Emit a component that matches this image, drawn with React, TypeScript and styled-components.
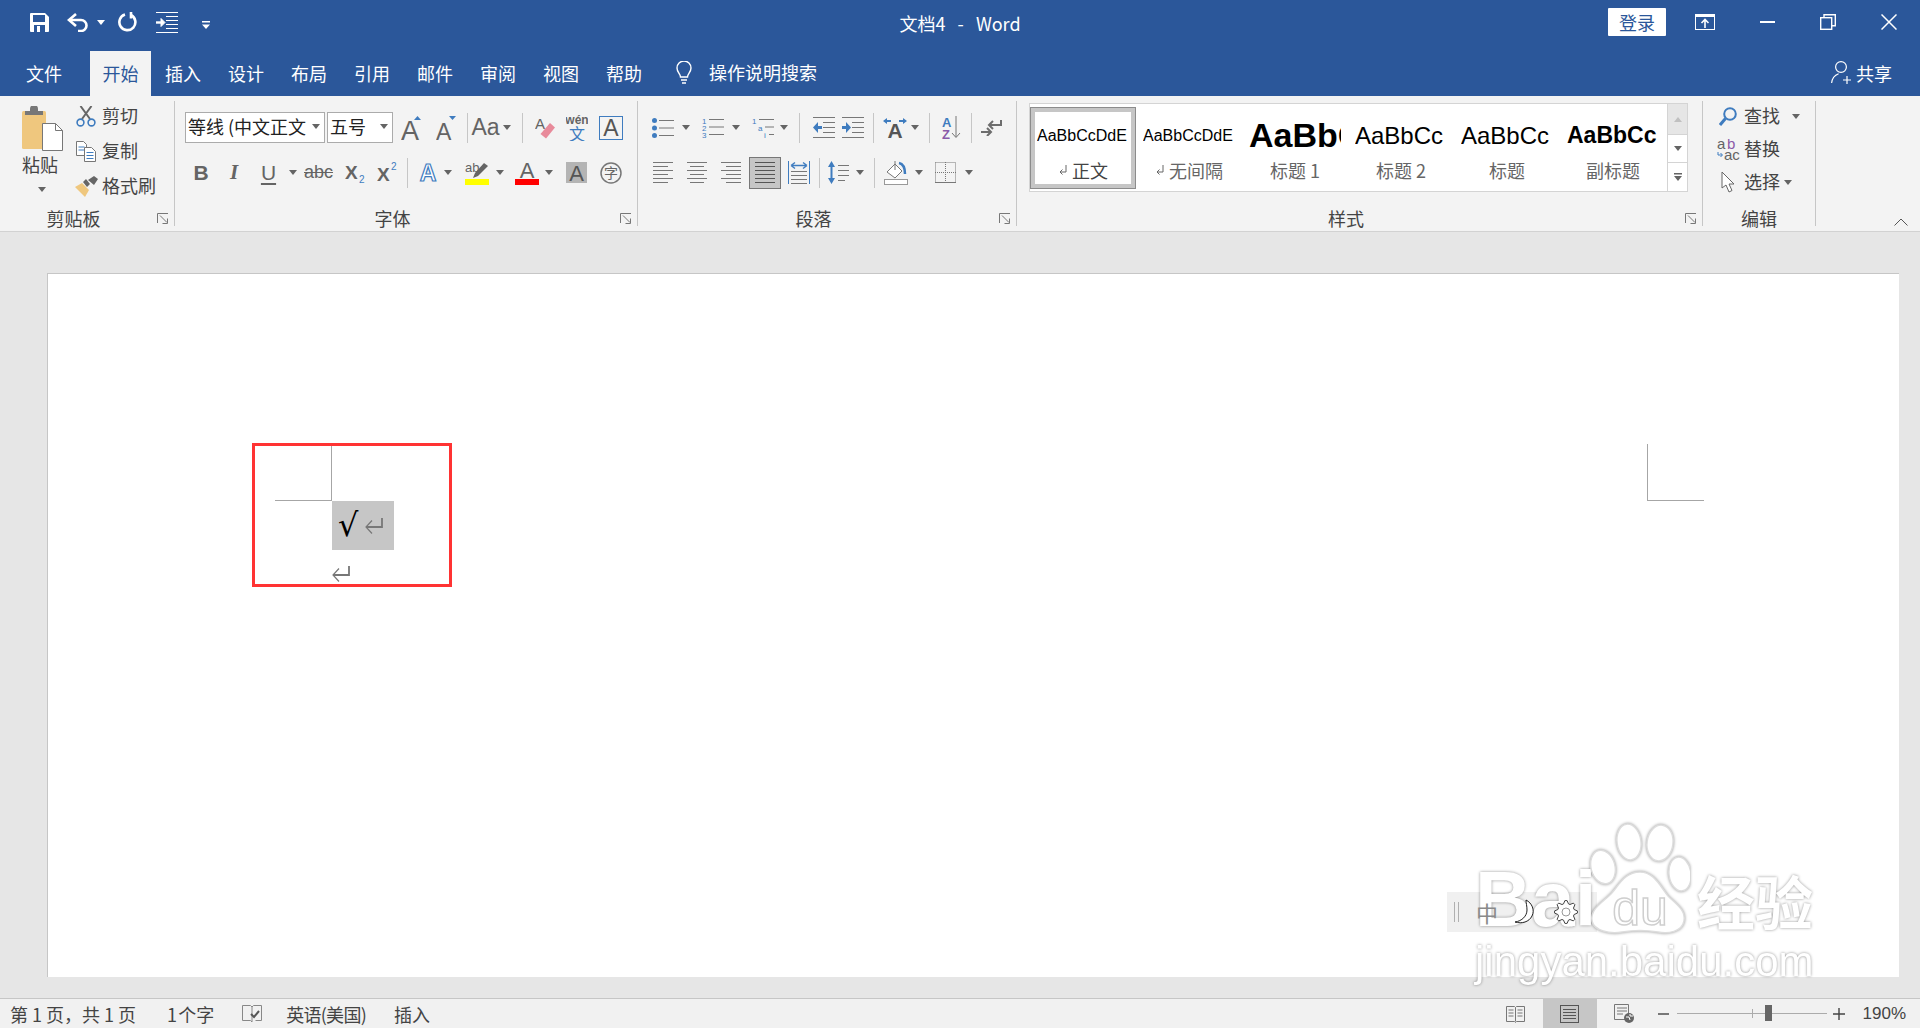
import { FC, ReactNode } from 'react'
import styled, { createGlobalStyle } from 'styled-components'

const GRAY = '#646464'
const BLUE = '#3f7cbf'
const CJK = '"Noto Sans CJK SC", "Liberation Sans", sans-serif'

const GlobalStyle = createGlobalStyle`
  html, body {
    margin: 0;
    width: 1920px;
    height: 1028px;
    overflow: hidden;
  }
  body {
    font-family: ${CJK};
    font-size: 18px;
    color: #444444;
  }
  svg {
    display: block;
    flex-shrink: 0;
  }
  svg text {
    font-family: "Liberation Sans", "Noto Sans CJK SC", sans-serif;
  }
`

const Window = styled.div`
  position: relative;
  width: 1920px;
  height: 1028px;
  display: flex;
  flex-direction: column;
  overflow: hidden;
  background: #e6e6e6;
`

/* title bar */
const TitleBar = styled.header`
  height: 51px;
  padding-bottom: 7px;
  box-sizing: border-box;
  background: #2b579a;
  color: #ffffff;
  display: grid;
  grid-template-columns: 1fr auto 1fr;
  align-items: center;
`

const QuickAccess = styled.div`
  display: flex;
  align-items: center;
  padding-left: 30px;
`

const WindowTitle = styled.div`
  white-space: pre;
  font-size: 18px;
  padding-top: 1px;
`

const WindowControls = styled.div`
  display: flex;
  align-items: center;
  justify-content: flex-end;
  padding-right: 23px;
`

const Slot = styled.div<{ $ml?: number; $mt?: number }>`
  margin-left: ${({ $ml }) => $ml ?? 0}px;
  margin-top: ${({ $mt }) => $mt ?? 0}px;
  display: flex;
`

const LoginButton = styled.button`
  width: 58px;
  height: 28px;
  border: 0;
  border-radius: 1px;
  padding: 0;
  background: #ffffff;
  color: #2b579a;
  font: inherit;
  font-size: 18px;
  line-height: 28px;
`

/* tabs */
const TabBar = styled.nav`
  height: 45px;
  background: #2b579a;
  color: #ffffff;
  display: flex;
  align-items: stretch;
  gap: 1px;
  padding-left: 13px;
`

const Tab = styled.div<{ $active?: boolean; $ml?: number }>`
  width: ${({ $active }) => ($active ? 61 : 62)}px;
  margin-left: ${({ $ml }) => $ml ?? 0}px;
  padding-bottom: 2px;
  box-sizing: border-box;
  display: flex;
  align-items: center;
  justify-content: center;
  background: ${({ $active }) => ($active ? '#f3f3f3' : 'transparent')};
  color: ${({ $active }) => ($active ? '#2b579a' : '#ffffff')};
`

const SearchHint = styled.div`
  display: flex;
  align-items: center;
  gap: 14px;
  margin-left: 17px;
  padding-bottom: 3px;
`

const ShareButton = styled.div`
  display: flex;
  align-items: center;
  gap: 4px;
  margin-left: auto;
  padding-right: 28px;
  padding-bottom: 2px;
`

/* ribbon */
const Ribbon = styled.section`
  height: 136px;
  box-sizing: border-box;
  border-bottom: 1px solid #d2d2d2;
  background: #f3f3f3;
  display: flex;
`

const Group = styled.div<{ $w: number }>`
  position: relative;
  box-sizing: border-box;
  width: ${({ $w }) => $w}px;
  height: 125px;
  margin-top: 5px;
  border-right: 1px solid #c6c6c6;
  display: flex;
  flex-direction: column;
`

const GroupBody = styled.div`
  height: 110px;
  flex-shrink: 0;
  display: flex;
`

const GroupLabel = styled.div<{ $pr?: number }>`
  height: 14px;
  line-height: 14px;
  padding-right: ${({ $pr }) => $pr ?? 0}px;
  text-align: center;
  color: #444444;
`

const Launcher = styled.div`
  position: absolute;
  right: 5px;
  bottom: 2px;
`

const Collapse = styled.div`
  flex: 1;
  display: flex;
  align-items: flex-end;
  justify-content: flex-end;
  padding: 0 12px 5px 0;
`

const PasteBlock = styled.div`
  width: 75px;
  box-sizing: border-box;
  padding: 5px 0 0 22px;
  display: flex;
  flex-direction: column;
  align-items: flex-start;
`

const PasteLabel = styled.div`
  width: 36px;
  line-height: 20px;
  margin-top: 2px;
`

const PasteCaret = styled.div`
  margin: 13px 0 0 16px;
`

const ActionStack = styled.div<{ $gap: number; $pl: number }>`
  display: flex;
  flex-direction: column;
  gap: ${({ $gap }) => $gap}px;
  padding-left: ${({ $pl }) => $pl}px;
`

const ActionRow = styled.div`
  height: 30px;
  display: flex;
  align-items: center;
`

const ActionIcon = styled.div`
  width: 22px;
  margin-right: 5px;
  display: flex;
  justify-content: center;
`

const ActionLabel = styled.span`
  margin-top: -2px;
`

const ToolStack = styled.div`
  padding-top: 4px;
  display: flex;
  flex-direction: column;
`

const ToolRow = styled.div<{ $pl?: number }>`
  height: 45px;
  padding-left: ${({ $pl }) => $pl ?? 0}px;
  display: flex;
  align-items: center;
`

const Tool = styled.div<{ $w: number; $ml?: number }>`
  width: ${({ $w }) => $w}px;
  margin-left: ${({ $ml }) => $ml ?? 0}px;
  height: 32px;
  display: flex;
  align-items: center;
  justify-content: center;
`

const PressedTool = styled(Tool)`
  box-sizing: border-box;
  background: #c6c6c6;
  border: 1px solid #777777;
`

const Sep = styled.div<{ $w: number }>`
  width: ${({ $w }) => $w}px;
  height: 30px;
  display: flex;
  justify-content: center;

  &::before {
    content: '';
    width: 1px;
    background: #c6c6c6;
  }
`

const SelectBox = styled.div<{ $w: number; $ml?: number }>`
  position: relative;
  box-sizing: border-box;
  width: ${({ $w }) => $w}px;
  margin-left: ${({ $ml }) => $ml ?? 0}px;
  height: 31px;
  padding-left: 2px;
  border: 1px solid #ababab;
  background: #ffffff;
  color: #222222;
  line-height: 26px;
  white-space: nowrap;
  overflow: hidden;
`

const SelectCaret = styled.div`
  position: absolute;
  top: 11px;
  right: 4px;
  padding-left: 2px;
  background: #ffffff;
`

const Glyph = styled.span<{ $size: number; $bold?: boolean; $italic?: boolean; $serif?: boolean; $under?: boolean; $strike?: boolean }>`
  font-family: ${({ $serif }) => ($serif ? '"Liberation Serif"' : '"Liberation Sans"')}, sans-serif;
  font-size: ${({ $size }) => $size}px;
  font-weight: ${({ $bold }) => ($bold ? 700 : 400)};
  font-style: ${({ $italic }) => ($italic ? 'italic' : 'normal')};
  text-decoration: ${({ $under, $strike }) => ($under ? 'underline' : $strike ? 'line-through' : 'none')};
  text-underline-offset: 3px;
  color: ${GRAY};
`

/* style gallery */
const Gallery = styled.div`
  box-sizing: border-box;
  width: 659px;
  height: 89px;
  margin: 2px 0 0 12px;
  border: 1px solid #d4d4d4;
  background: #ffffff;
  display: flex;
`

const StyleItem = styled.div<{ $selected?: boolean }>`
  box-sizing: border-box;
  width: 106px;
  height: 82px;
  margin-top: 3px;
  border: 1px solid ${({ $selected }) => ($selected ? '#8c8c8c' : 'transparent')};
  box-shadow: ${({ $selected }) => ($selected ? 'inset 0 0 0 4px #c6c6c6' : 'none')};
  display: flex;
  flex-direction: column;
  align-items: center;
`

const StylePreview = styled.div<{ $size: number; $bold?: boolean }>`
  width: 92px;
  height: 55px;
  flex-shrink: 0;
  overflow: hidden;
  white-space: nowrap;
  font-family: "Liberation Sans", sans-serif;
  font-size: ${({ $size }) => $size}px;
  font-weight: ${({ $bold }) => ($bold ? 700 : 400)};
  line-height: 55px;
  color: #000000;
`

const StyleName = styled.div<{ $selected?: boolean }>`
  display: flex;
  align-items: center;
  gap: 4px;
  height: 28px;
  margin-top: -7px;
  color: ${({ $selected }) => ($selected ? '#444444' : '#666666')};
`

const ScrollColumn = styled.div`
  margin-left: 1px;
  flex: 1;
  display: flex;
  flex-direction: column;
  border-left: 1px solid #d4d4d4;
`

const ScrollButton = styled.div<{ $h: number; $disabled?: boolean }>`
  height: ${({ $h }) => $h}px;
  box-sizing: border-box;
  display: flex;
  align-items: center;
  justify-content: center;
  background: ${({ $disabled }) => ($disabled ? '#e6e6e6' : '#ffffff')};
  & + & {
    border-top: 1px solid #d4d4d4;
  }
`

/* document */
const Workspace = styled.main`
  flex: 1;
  min-height: 0;
  padding: 41px 21px 21px 47px;
  display: flex;
`

const Page = styled.article`
  position: relative;
  flex: 1;
  box-sizing: border-box;
  padding: 227px 0 0 284px;
  background: #ffffff;
  border-top: 1px solid #c6c6c6;
  border-left: 1px solid #c6c6c6;
`

const CropMarkLeft = styled.div`
  position: absolute;
  left: 227px;
  top: 170px;
  width: 57px;
  height: 57px;
  box-sizing: border-box;
  border-right: 1px solid #a6a6a6;
  border-bottom: 1px solid #a6a6a6;
`

const CropMarkRight = styled.div`
  position: absolute;
  left: 1599px;
  top: 170px;
  width: 57px;
  height: 57px;
  box-sizing: border-box;
  border-left: 1px solid #a6a6a6;
  border-bottom: 1px solid #a6a6a6;
`

const RedFrame = styled.div`
  position: absolute;
  left: 204px;
  top: 169px;
  width: 200px;
  height: 144px;
  box-sizing: border-box;
  border: 3px solid #ff3333;
`

const SelectedRun = styled.div`
  width: 62px;
  height: 49px;
  background: #c6c6c6;
  display: flex;
  align-items: center;
  padding-left: 6px;
  box-sizing: border-box;
  gap: 7px;
`

const CheckMark = styled.span`
  font-family: "DejaVu Sans", sans-serif;
  font-size: 32px;
  line-height: 49px;
  color: #000000;
`

const EmptyParagraph = styled.div`
  margin-top: 16px;
`

const ImeBar = styled.div`
  position: absolute;
  left: 1447px;
  top: 892px;
  width: 150px;
  height: 40px;
  box-sizing: border-box;
  padding-left: 7px;
  background: #f0f0f0;
  display: flex;
  align-items: center;
  color: #8a8a8a;
`

const ImeItem = styled.div<{ $ml?: number }>`
  position: relative;
  z-index: 2;
  margin-left: ${({ $ml }) => $ml ?? 0}px;
  display: flex;
  font-size: 22px;
`

const Watermark = styled.div`
  position: absolute;
  z-index: 1;
  left: 1475px;
  top: 820px;
  display: flex;
  flex-direction: column;
  color: #ffffff;
  filter: drop-shadow(0 0 1.5px rgba(0, 0, 0, 0.42));
  pointer-events: none;
`

const WatermarkTop = styled.div`
  height: 115px;
  display: flex;
  align-items: flex-end;
`

const WatermarkBai = styled.span`
  width: 115px;
  font-family: "Liberation Sans", sans-serif;
  font-size: 78px;
  font-weight: 700;
  line-height: 78px;
  margin-bottom: -3px;
`

const WatermarkCn = styled.span`
  margin-left: 7px;
  font-family: ${CJK};
  font-size: 58px;
  font-weight: 700;
  line-height: 70px;
`

const WatermarkUrl = styled.div`
  margin-top: 3px;
  font-family: "Liberation Sans", sans-serif;
  font-size: 42px;
  line-height: 48px;
  white-space: nowrap;
`

/* status bar */
const StatusBar = styled.footer`
  height: 30px;
  box-sizing: border-box;
  border-top: 1px solid #c6c6c6;
  background: #f1f1f1;
  display: flex;
  align-items: stretch;
  padding-right: 14px;
  color: #444444;
`

const StatusItem = styled.div<{ $ml: number; $track?: number; $words?: number }>`
  margin-left: ${({ $ml }) => $ml}px;
  display: flex;
  align-items: center;
  white-space: pre;
  letter-spacing: ${({ $track }) => $track ?? 0}px;
  word-spacing: ${({ $words }) => $words ?? 0}px;
`

const ViewGroup = styled.div`
  margin-left: auto;
  display: flex;
`

const ViewButton = styled.div<{ $active?: boolean }>`
  width: 54px;
  display: flex;
  align-items: center;
  justify-content: center;
  background: ${({ $active }) => ($active ? '#c6c6c6' : 'transparent')};
`

const ZoomSlider = styled.div`
  position: relative;
  width: 150px;
  margin-left: 7px;
  align-self: center;
  height: 1px;
  background: #ababab;

  &::before {
    content: '';
    position: absolute;
    left: 75px;
    top: -4px;
    width: 1px;
    height: 9px;
    background: #ababab;
  }
`

const ZoomThumb = styled.div`
  position: absolute;
  left: 88px;
  top: -8px;
  width: 7px;
  height: 16px;
  background: #666666;
`

const ZoomPercent = styled.div`
  margin-left: 18px;
  display: flex;
  align-items: center;
  font-family: "Liberation Sans", sans-serif;
  font-size: 17px;
`

/* icons */
const Caret: FC<{ color?: string }> = ({ color = GRAY }) => (
  <svg width="8" height="5" viewBox="0 0 8 5"><path d="M0 0h8L4 5z" fill={color} /></svg>
)

const LauncherIcon = () => (
  <svg width="12" height="11" viewBox="0 0 12 11" fill="none" stroke="#777777">
    <path d="M.5 10V.5H11" />
    <path d="M3 2.500l7 7M10.500 5.500v5h-5" />
  </svg>
)

const SaveIcon = () => (
  <svg width="19" height="19" viewBox="0 0 19 19">
    <path d="M0 1a1 1 0 0 1 1-1h14l4 4v14a1 1 0 0 1-1 1H1a1 1 0 0 1-1-1z" fill="#fff" />
    <rect x="3" y="2" width="12" height="7" fill="#2b579a" />
    <rect x="4" y="12" width="11" height="7" fill="#2b579a" />
    <rect x="7" y="13" width="3" height="6" fill="#fff" />
  </svg>
)

const UndoIcon = () => (
  <svg width="23" height="19" viewBox="0 0 23 19" fill="none" stroke="#fff" strokeWidth="2.6">
    <path d="M9 1L2 7l7 6" />
    <path d="M2 7h12a5.500 5.500 0 0 1 0 11h-3" />
  </svg>
)

const RepeatIcon = () => (
  <svg width="20" height="20" viewBox="0 0 20 20" fill="none" stroke="#fff" strokeWidth="2.6">
    <path d="M7 2.500A8 8 0 1 0 13 3" />
    <path d="M13 0v6.500" />
  </svg>
)

const IndentIcon = () => (
  <svg width="22" height="21" viewBox="0 0 22 21" fill="none" stroke="#fff">
    <path d="M0 .5h22M10 4.500h12M10 8.500h12M10 12.500h12M10 16.500h12M0 20.500h22" />
    <path d="M0 10.500h6" strokeWidth="2.4" />
    <path d="M5 6.500l4 4-4 4z" fill="#fff" />
  </svg>
)

const CustomizeIcon = () => (
  <svg width="8" height="8" viewBox="0 0 8 8">
    <path d="M0 0h8v1.500H0zM0 3.500h8L4 8z" fill="#fff" />
  </svg>
)

const RibbonDisplayIcon = () => (
  <svg width="20" height="16" viewBox="0 0 20 16" fill="none" stroke="#fff">
    <rect x=".5" y=".5" width="19" height="15" />
    <path d="M0 2h20" strokeWidth="2" />
    <path d="M10 14V6M6.500 9L10 5.500 13.500 9" strokeWidth="1.6" />
  </svg>
)

const MinimizeIcon = () => (
  <svg width="15" height="2" viewBox="0 0 15 2"><path d="M0 1h15" stroke="#fff" strokeWidth="2" /></svg>
)

const RestoreIcon = () => (
  <svg width="16" height="16" viewBox="0 0 16 16" fill="none" stroke="#fff" strokeWidth="1.4">
    <rect x=".7" y="3.700" width="11" height="11.600" />
    <path d="M4 3.500V.7h11.300v11H12" />
  </svg>
)

const CloseIcon = () => (
  <svg width="16" height="16" viewBox="0 0 16 16"><path d="M.5.5l15 15M15.500.5l-15 15" stroke="#fff" strokeWidth="1.5" /></svg>
)

const BulbIcon = () => (
  <svg width="22" height="23" viewBox="0 0 22 23" fill="none" stroke="#fff" strokeWidth="1.4">
    <path d="M7.500 16c0-3-3.500-4.500-3.500-9a7 7 0 0 1 14 0c0 4.500-3.500 6-3.500 9z" />
    <path d="M8 19h6M9 22h4" />
  </svg>
)

const ShareIcon = () => (
  <svg width="21" height="23" viewBox="0 0 21 23" fill="none" stroke="#fff" strokeWidth="1.2">
    <circle cx="10" cy="6" r="5.400" />
    <path d="M.6 22c.5-5 3.500-8 7-9.300M16 15v8M12 19h8" />
  </svg>
)

const PasteIcon = () => (
  <svg width="42" height="46" viewBox="0 0 42 46">
    <rect y="5" width="24" height="38" rx="1.500" fill="#efc77e" />
    <path d="M3 5h5V3a4 4 0 0 1 8 0v2h5v4H3z" fill="#777777" />
    <path d="M20.500 17.500h13l7 7v20h-20z" fill="#fff" stroke="#777777" />
    <path d="M33.500 17.500v7h7" fill="none" stroke="#777777" />
  </svg>
)

const ScissorsIcon = () => (
  <svg width="20" height="21" viewBox="0 0 20 21" fill="none">
    <path d="M6 13L15.500 0M14 13L4.500 0" stroke="#666666" strokeWidth="2" />
    <circle cx="4.500" cy="16.500" r="3.400" stroke={BLUE} strokeWidth="1.600" />
    <circle cx="15.500" cy="16.500" r="3.400" stroke={BLUE} strokeWidth="1.600" />
  </svg>
)

const CopyIcon = () => (
  <svg width="20" height="21" viewBox="0 0 20 21" fill="none">
    <path d="M.5.500h7l3 3v11H.5z" stroke="#777777" fill="#fff" />
    <path d="M2.500 6h6M2.500 9h6" stroke={BLUE} />
    <path d="M8.500 6.500h7l4 4v10h-11z" stroke="#777777" fill="#fff" />
    <path d="M10.500 11.500h7M10.500 14.500h7M10.500 17.500h7" stroke={BLUE} />
  </svg>
)

const BrushIcon = () => (
  <svg width="23" height="21" viewBox="0 0 23 21">
    <path d="M0 11l7-4 7 7-4 7z" fill="#efc77e" />
    <path d="M8 6l3-3 4 5-3 3z M13 4l6-4 4 3-4 6z" fill="#666666" />
  </svg>
)

const GrowIcon: FC<{ down?: boolean; size: number }> = ({ down, size }) => (
  <svg width="22" height="26" viewBox="0 0 22 26">
    <text x="0" y="25" fontSize={size} fill={GRAY}>A</text>
    {down
      ? <path d="M13 1h7l-3.500 4z" fill={BLUE} />
      : <path d="M13 5h7l-3.500-4z" fill={BLUE} />}
  </svg>
)

const EraserIcon = () => (
  <svg width="20" height="24" viewBox="0 0 20 24">
    <text x="0" y="13" fontSize="15" fill={GRAY}>A</text>
    <path d="M15 7l5 4.500-9 11-5.500-4.500z" fill="#e88a9a" />
  </svg>
)

const WenIcon = () => (
  <svg width="22" height="27" viewBox="0 0 22 27">
    <text x="11" y="10" textAnchor="middle" fontSize="12" fontWeight="700" fill={GRAY}>wén</text>
    <text x="11" y="26" textAnchor="middle" fontSize="16" fill={BLUE}>文</text>
  </svg>
)

const BorderedAIcon = () => (
  <svg width="24" height="24" viewBox="0 0 24 24">
    <rect x=".5" y=".5" width="23" height="23" fill="none" stroke={BLUE} />
    <text x="12" y="20" textAnchor="middle" fontSize="23" fill="#555555">A</text>
  </svg>
)

const SubSupIcon: FC<{ sup?: boolean }> = ({ sup }) => (
  <svg width="20" height="22" viewBox="0 0 20 22">
    <text x="0" y={sup ? 19 : 17} fontSize="19" fontWeight="700" fill={GRAY}>X</text>
    <text x="14" y={sup ? 8 : 21} fontSize="10" fill={BLUE}>2</text>
  </svg>
)

const OutlineAIcon = () => (
  <svg width="20" height="24" viewBox="0 0 20 24">
    <text x="10" y="20" textAnchor="middle" fontSize="23" fontWeight="700" fill="#fff" stroke={BLUE} strokeWidth="1.200">A</text>
  </svg>
)

const HighlightIcon = () => (
  <svg width="24" height="24" viewBox="0 0 24 24">
    <text x="0" y="11" fontSize="13" fill={GRAY}>ab</text>
    <path d="M19 2l4 3-10 10-5 2 2-5z" fill={GRAY} />
    <rect y="18" width="24" height="6" fill="#ffff00" />
  </svg>
)

const FontColorIcon = () => (
  <svg width="24" height="24" viewBox="0 0 24 24">
    <text x="12" y="17" textAnchor="middle" fontSize="22" fill={GRAY}>A</text>
    <rect y="18" width="24" height="6" fill="#ff0000" />
  </svg>
)

const ShadedAIcon = () => (
  <svg width="21" height="21" viewBox="0 0 21 21">
    <rect width="21" height="21" fill="#b4b4b4" />
    <text x="10.500" y="19" textAnchor="middle" fontSize="22" fill="#555555">A</text>
  </svg>
)

const CircledCharIcon = () => (
  <svg width="22" height="22" viewBox="0 0 22 22">
    <circle cx="11" cy="11" r="10" fill="none" stroke="#777777" strokeWidth="1.500" />
    <text x="11" y="16" textAnchor="middle" fontSize="14" fill="#666666">字</text>
  </svg>
)

const BulletsIcon = () => (
  <svg width="22" height="20" viewBox="0 0 22 20">
    <circle cx="2.500" cy="2.500" r="2.500" fill={BLUE} />
    <circle cx="2.500" cy="10" r="2.500" fill={BLUE} />
    <circle cx="2.500" cy="17.500" r="2.500" fill={BLUE} />
    <path d="M7 2.500h15M7 10h15M7 17.500h15" stroke="#777777" />
  </svg>
)

const NumberingIcon = () => (
  <svg width="22" height="21" viewBox="0 0 22 21">
    <text x="0" y="7" fontSize="8" fill={BLUE}>1</text>
    <text x="0" y="14" fontSize="8" fill={BLUE}>2</text>
    <text x="0" y="21" fontSize="8" fill={BLUE}>3</text>
    <path d="M7 2.500h15M7 10h15M7 17.500h15" stroke="#777777" />
  </svg>
)

const MultilevelIcon = () => (
  <svg width="22" height="21" viewBox="0 0 22 21">
    <text x="0" y="7" fontSize="8" fill={BLUE}>1</text>
    <text x="6" y="14" fontSize="8" fill={BLUE}>a</text>
    <text x="12" y="21" fontSize="8" fill={BLUE}>i</text>
    <path d="M7 2.500h15M13 10h9M17 17.500h5" stroke="#777777" />
  </svg>
)

const IndentChangeIcon: FC<{ increase?: boolean }> = ({ increase }) => (
  <svg width="22" height="21" viewBox="0 0 22 21">
    <path d="M0 .5h22M10 5.500h12M10 10.500h12M10 15.500h12M0 20.500h22" stroke="#777777" />
    {increase
      ? <path d="M0 9h4V5l5 5.500-5 5.500v-4H0z" fill={BLUE} />
      : <path d="M9 9H5V5L0 10.500 5 16v-4h4z" fill={BLUE} />}
  </svg>
)

const TextDirectionIcon = () => (
  <svg width="24" height="20" viewBox="0 0 24 20">
    <path d="M0 3l4-3v2h4v2H4v2zM24 3l-4-3v2h-4v2h4v2z" fill={BLUE} />
    <text x="12" y="20" textAnchor="middle" fontSize="21" fontWeight="700" fill="#555555">A</text>
  </svg>
)

const SortIcon = () => (
  <svg width="19" height="23" viewBox="0 0 19 23">
    <text x="0" y="11" fontSize="13" fontWeight="700" fill={BLUE}>A</text>
    <text x="0" y="23" fontSize="13" fontWeight="700" fill="#8a5aa8">Z</text>
    <path d="M14 0v21M10 17l4 4.500 4-4.500" stroke="#777777" fill="none" />
  </svg>
)

const MarksIcon = () => (
  <svg width="21" height="17" viewBox="0 0 21 17" fill="none" stroke="#6d6d6d" strokeWidth="2">
    <path d="M20 1v5H9M12 2L8 6l4 4" />
    <path d="M0 13h9M6 9l4 4-4 4" />
  </svg>
)

const AlignIcon: FC<{ mode: 'left' | 'center' | 'right' | 'justify' }> = ({ mode }) => {
  const short = {
    left: 'M0 4.500h15M0 12.500h15M0 20.500h15',
    center: 'M3 4.500h14M3 12.500h14M3 20.500h14',
    right: 'M5 4.500h15M5 12.500h15M5 20.500h15',
    justify: 'M0 4.500h20M0 12.500h20M0 20.500h20',
  }[mode]
  return (
    <svg width="20" height="21" viewBox="0 0 20 21" stroke={mode === 'justify' ? '#555555' : '#777777'}>
      <path d="M0 .5h20M0 8.500h20M0 16.500h20" />
      <path d={short} />
    </svg>
  )
}

const DistributeIcon = () => (
  <svg width="22" height="23" viewBox="0 0 22 23">
    <path d="M.5 0v23M21.500 0v23" stroke={BLUE} />
    <path d="M4 4.500h14M3 4.500L7 1.500M3 4.500L7 7.500M19 4.500L15 1.500M19 4.500L15 7.500" stroke={BLUE} fill="none" strokeWidth="1.400" />
    <path d="M3 10.500h16M3 14.500h16M3 18.500h16M3 22.500h16" stroke="#777777" />
  </svg>
)

const LineSpacingIcon = () => (
  <svg width="21" height="23" viewBox="0 0 21 23">
    <path d="M3.500 4v15" stroke={BLUE} strokeWidth="2" />
    <path d="M0 6l3.500-6L7 6zM0 17l3.500 6L7 17z" fill={BLUE} />
    <path d="M10 4.500h11M10 9.500h11M10 14.500h11M10 19.500h7" stroke="#777777" />
  </svg>
)

const ShadingIcon = () => (
  <svg width="24" height="24" viewBox="0 0 24 24">
    <path d="M3 11l8-8 7 7-7 7z" fill="#fff" stroke="#777777" />
    <path d="M11 0v9" stroke="#777777" />
    <path d="M15 2c5 1 6 6 6 11" fill="none" stroke={BLUE} strokeWidth="2.500" />
    <rect x=".5" y="18.500" width="23" height="5" fill="#fff" stroke="#999999" />
  </svg>
)

const BordersIcon = () => (
  <svg width="21" height="21" viewBox="0 0 21 21" fill="none" stroke="#777777">
    <path d="M.5.5h20v20M.5.5v20M10.500 0v21M0 10.500h21" strokeDasharray="1 1" />
    <path d="M0 20.500h21" />
  </svg>
)

const SmallReturn = () => (
  <svg width="10" height="11" viewBox="0 0 10 11" fill="none" stroke="#666666">
    <path d="M8 0v7H2M4.500 4.500L2 7l2.500 2.500" />
  </svg>
)

const SearchIcon = () => (
  <svg width="18" height="19" viewBox="0 0 18 19" fill="none" stroke={BLUE}>
    <circle cx="11" cy="7" r="5.800" strokeWidth="2" />
    <path d="M6.500 11.500L1 18" strokeWidth="3" />
  </svg>
)

const ReplaceIcon = () => (
  <svg width="23" height="21" viewBox="0 0 23 21">
    <text x="0" y="10" fontSize="15" fill={GRAY}>a</text>
    <text x="10" y="10" fontSize="15" fill="#8a5aa8">b</text>
    <text x="7" y="21" fontSize="15" fill={GRAY}>ac</text>
    <path d="M1 13v3h4M3.500 14l2 2-2 2" stroke={BLUE} fill="none" />
  </svg>
)

const CursorIcon = () => (
  <svg width="15" height="22" viewBox="0 0 15 22">
    <path d="M1 1v16l4-3 3 7 3-1.500-3-6.500h5z" fill="#fff" stroke="#666666" />
  </svg>
)

const ChevronUp = () => (
  <svg width="14" height="8" viewBox="0 0 14 8"><path d="M.5 7.500L7 1l6.500 6.500" fill="none" stroke="#555555" /></svg>
)

const ReturnArrow = () => (
  <svg width="18" height="16" viewBox="0 0 18 16" fill="none" stroke="#777777">
    <path d="M17 0v9H1" strokeWidth="1.800" />
    <path d="M7 2.500L1 9l6 6.500" strokeWidth="1.200" />
  </svg>
)

const ImeGrip = () => (
  <svg width="6" height="20" viewBox="0 0 6 20"><path d="M.5 0v20M4.500 0v20" stroke="#b0b0b0" /></svg>
)

const ImeMoon = () => (
  <svg width="22" height="26" viewBox="0 0 22 26">
    <path d="M12 1c6 3 9 10 6 16-3 6-10 8-17 6 7-1 12-6 12-12 0-4-1-7-1-10z" fill="#fff" stroke="#222222" />
  </svg>
)

// eight-toothed cog outline for the IME bar
const COG_PATH = Array.from({ length: 32 }, (_, i) => {
  const angle = ((i - 0.5) * Math.PI) / 16
  const r = i % 4 < 2 ? 11.5 : 8.5
  return `${i === 0 ? 'M' : 'L'}${(12 + r * Math.cos(angle)).toFixed(1)} ${(12 + r * Math.sin(angle)).toFixed(1)}`
}).join('') + 'z'

const ImeGear = () => (
  <svg width="24" height="24" viewBox="0 0 24 24" fill="#fff" stroke="#444444">
    <path d={COG_PATH} />
    <circle cx="12" cy="12" r="4" stroke="#999999" />
  </svg>
)

const PawIcon = () => (
  <svg width="100" height="115" viewBox="0 0 100 115" fill="#fff" stroke="#ddd" strokeWidth="1.500">
    <ellipse cx="13" cy="47" rx="12" ry="17" transform="rotate(-15 13 47)" />
    <ellipse cx="39" cy="22" rx="12" ry="18" transform="rotate(-8 39 22)" />
    <ellipse cx="70" cy="23" rx="13" ry="18" transform="rotate(8 70 23)" />
    <ellipse cx="90" cy="54" rx="11" ry="17" transform="rotate(-8 90 54)" />
    <path d="M50 52c14 0 20 14 28 24 8 8 18 14 16 25-2 11-16 13-26 11-12-2-24-2-36 0-12 2-28-1-30-11-2-12 10-18 19-27 8-9 14-22 29-22z" />
    <text x="50" y="105" textAnchor="middle" fontSize="50" fill="#fff" stroke="#cfcfcf">du</text>
  </svg>
)

const ReadViewIcon = () => (
  <svg width="19" height="18" viewBox="0 0 19 18" fill="none" stroke="#777777">
    <path d="M.5 1.500h8l1 1 1-1h8v15h-8l-1 1-1-1h-8zM9.500 2.500v14" />
    <path d="M2.500 5h5M2.500 8h5M2.500 11h5M11.500 5h5M11.500 8h5M11.500 11h5" />
  </svg>
)

const PrintViewIcon = () => (
  <svg width="19" height="18" viewBox="0 0 19 18" fill="none" stroke="#555555">
    <rect x=".5" y=".5" width="18" height="17" />
    <path d="M3 4.500h13M3 7.500h13M3 10.500h13M3 13.500h13" />
  </svg>
)

const WebViewIcon = () => (
  <svg width="20" height="19" viewBox="0 0 20 19" fill="none" stroke="#777777">
    <path d="M.5.5h14v15H.5zM3 4h10M3 7h10M3 10h6" />
    <circle cx="15" cy="14" r="5" fill="#666666" stroke="none" />
    <path d="M12 13h3l1 3M16 10v2h3" stroke="#fff" />
  </svg>
)

const ProofIcon = () => (
  <svg width="20" height="18" viewBox="0 0 20 18" fill="none" stroke="#888888">
    <path d="M.5.500h8l1.500 1.500V17L8.500 15.500h-8zM10 2l1.500-1.500h8v15h-6" />
    <path d="M9 9l3 3 5-6" stroke="#555555" strokeWidth="2" />
  </svg>
)

const ZoomSign: FC<{ plus?: boolean }> = ({ plus }) => (
  <svg width="12" height="12" viewBox="0 0 12 12">
    <path d={plus ? 'M0 6h12M6 0v12' : 'M0 6h11'} stroke="#444444" strokeWidth="1.400" />
  </svg>
)

const TABS = ['插入', '设计', '布局', '引用', '邮件', '审阅', '视图', '帮助']

const GALLERY: { sample: string; size: number; bold?: boolean; name: string; mark?: boolean; selected?: boolean }[] = [
  { sample: 'AaBbCcDdE', size: 16, name: '正文', mark: true, selected: true },
  { sample: 'AaBbCcDdE', size: 16, name: '无间隔', mark: true },
  { sample: 'AaBbCc', size: 34, bold: true, name: '标题 1' },
  { sample: 'AaBbCc', size: 24, name: '标题 2' },
  { sample: 'AaBbCc', size: 24, name: '标题' },
  { sample: 'AaBbCc', size: 23, bold: true, name: '副标题' },
]

const Action: FC<{ icon: ReactNode; label: string; trail?: ReactNode }> = ({ icon, label, trail }) => (
  <ActionRow>
    <ActionIcon>{icon}</ActionIcon>
    <ActionLabel>{label}</ActionLabel>
    {trail}
  </ActionRow>
)

const App: FC = () => (
  <Window>
    <GlobalStyle />
    <TitleBar>
      <QuickAccess>
        <SaveIcon />
        <Slot $ml={18}><UndoIcon /></Slot>
        <Slot $ml={7}><Caret color="#ffffff" /></Slot>
        <Slot $ml={13}><RepeatIcon /></Slot>
        <Slot $ml={18}><IndentIcon /></Slot>
        <Slot $ml={24} $mt={5}><CustomizeIcon /></Slot>
      </QuickAccess>
      <WindowTitle>文档4   -   Word</WindowTitle>
      <WindowControls>
        <LoginButton>登录</LoginButton>
        <Slot $ml={29}><RibbonDisplayIcon /></Slot>
        <Slot $ml={45}><MinimizeIcon /></Slot>
        <Slot $ml={45}><RestoreIcon /></Slot>
        <Slot $ml={45}><CloseIcon /></Slot>
      </WindowControls>
    </TitleBar>

    <TabBar>
      <Tab>文件</Tab>
      <Tab $active $ml={14}>开始</Tab>
      {TABS.map(tab => <Tab key={tab}>{tab}</Tab>)}
      <SearchHint><BulbIcon />操作说明搜索</SearchHint>
      <ShareButton><ShareIcon />共享</ShareButton>
    </TabBar>

    <Ribbon>
      <Group $w={175}>
        <GroupBody>
          <PasteBlock>
            <PasteIcon />
            <PasteLabel>粘贴</PasteLabel>
            <PasteCaret><Caret /></PasteCaret>
          </PasteBlock>
          <ActionStack $gap={5} $pl={0}>
            <Action icon={<ScissorsIcon />} label="剪切" />
            <Action icon={<CopyIcon />} label="复制" />
            <Action icon={<BrushIcon />} label="格式刷" />
          </ActionStack>
        </GroupBody>
        <GroupLabel $pr={27}>剪贴板</GroupLabel>
        <Launcher><LauncherIcon /></Launcher>
      </Group>

      <Group $w={463}>
        <GroupBody>
          <ToolStack>
            <ToolRow $pl={10}>
              <SelectBox $w={140}>等线 (中文正文<SelectCaret><Caret /></SelectCaret></SelectBox>
              <SelectBox $w={66} $ml={2}>五号<SelectCaret><Caret /></SelectCaret></SelectBox>
              <Tool $w={38}><GrowIcon size={27} /></Tool>
              <Tool $w={31}><GrowIcon size={23} down /></Tool>
              <Sep $w={10} />
              <Tool $w={27}><Glyph $size={23}>Aa</Glyph></Tool>
              <Tool $w={16}><Caret /></Tool>
              <Sep $w={14} />
              <Tool $w={32}><EraserIcon /></Tool>
              <Tool $w={32}><WenIcon /></Tool>
              <Tool $w={36}><BorderedAIcon /></Tool>
            </ToolRow>
            <ToolRow $pl={10}>
              <Tool $w={32}><Glyph $size={21} $bold>B</Glyph></Tool>
              <Tool $w={34}><Glyph $size={21} $bold $italic $serif>I</Glyph></Tool>
              <Tool $w={35}><Glyph $size={21} $under>U</Glyph></Tool>
              <Tool $w={13}><Caret /></Tool>
              <Tool $w={39}><Glyph $size={18} $strike>abc</Glyph></Tool>
              <Tool $w={34}><SubSupIcon /></Tool>
              <Tool $w={30}><SubSupIcon sup /></Tool>
              <Sep $w={10} />
              <Tool $w={32}><OutlineAIcon /></Tool>
              <Tool $w={8}><Caret /></Tool>
              <Tool $w={38} $ml={6}><HighlightIcon /></Tool>
              <Tool $w={8}><Caret /></Tool>
              <Tool $w={34} $ml={6}><FontColorIcon /></Tool>
              <Tool $w={10}><Caret /></Tool>
              <Tool $w={45}><ShadedAIcon /></Tool>
              <Tool $w={24}><CircledCharIcon /></Tool>
            </ToolRow>
          </ToolStack>
        </GroupBody>
        <GroupLabel $pr={27}>字体</GroupLabel>
        <Launcher><LauncherIcon /></Launcher>
      </Group>

      <Group $w={379}>
        <GroupBody>
          <ToolStack>
            <ToolRow>
              <Tool $w={38} $ml={6}><BulletsIcon /></Tool>
              <Tool $w={8}><Caret /></Tool>
              <Tool $w={38} $ml={4}><NumberingIcon /></Tool>
              <Tool $w={8}><Caret /></Tool>
              <Tool $w={34} $ml={6}><MultilevelIcon /></Tool>
              <Tool $w={8}><Caret /></Tool>
              <Sep $w={22} />
              <Tool $w={28}><IndentChangeIcon /></Tool>
              <Tool $w={30}><IndentChangeIcon increase /></Tool>
              <Sep $w={10} />
              <Tool $w={33}><TextDirectionIcon /></Tool>
              <Tool $w={8}><Caret /></Tool>
              <Sep $w={20} />
              <Tool $w={24}><SortIcon /></Tool>
              <Sep $w={16} />
              <Tool $w={25}><MarksIcon /></Tool>
            </ToolRow>
            <ToolRow>
              <Tool $w={34} $ml={8}><AlignIcon mode="left" /></Tool>
              <Tool $w={34}><AlignIcon mode="center" /></Tool>
              <Tool $w={34}><AlignIcon mode="right" /></Tool>
              <PressedTool $w={32} $ml={1}><AlignIcon mode="justify" /></PressedTool>
              <Tool $w={36}><DistributeIcon /></Tool>
              <Sep $w={4} />
              <Tool $w={35}><LineSpacingIcon /></Tool>
              <Tool $w={8}><Caret /></Tool>
              <Sep $w={20} />
              <Tool $w={24}><ShadingIcon /></Tool>
              <Tool $w={8} $ml={7}><Caret /></Tool>
              <Tool $w={37} $ml={4}><BordersIcon /></Tool>
              <Tool $w={8} $ml={1}><Caret /></Tool>
            </ToolRow>
          </ToolStack>
        </GroupBody>
        <GroupLabel $pr={27}>段落</GroupLabel>
        <Launcher><LauncherIcon /></Launcher>
      </Group>

      <Group $w={686}>
        <GroupBody>
          <Gallery>
            {GALLERY.map(item => (
              <StyleItem key={item.name} $selected={item.selected}>
                <StylePreview $size={item.size} $bold={item.bold}>{item.sample}</StylePreview>
                <StyleName $selected={item.selected}>
                  {item.mark && <SmallReturn />}
                  {item.name}
                </StyleName>
              </StyleItem>
            ))}
            <ScrollColumn>
              <ScrollButton $h={30} $disabled>
                <svg width="8" height="5" viewBox="0 0 8 5"><path d="M0 5h8L4 0z" fill="#c0c0c0" /></svg>
              </ScrollButton>
              <ScrollButton $h={28}><Caret /></ScrollButton>
              <ScrollButton $h={29}>
                <svg width="8" height="8" viewBox="0 0 8 8"><path d="M0 0h8v1.500H0zM0 3h8L4 8z" fill={GRAY} /></svg>
              </ScrollButton>
            </ScrollColumn>
          </Gallery>
        </GroupBody>
        <GroupLabel $pr={27}>样式</GroupLabel>
        <Launcher><LauncherIcon /></Launcher>
      </Group>

      <Group $w={113}>
        <GroupBody>
          <ActionStack $gap={3} $pl={14}>
            <Action icon={<SearchIcon />} label="查找" trail={<Slot $ml={12}><Caret /></Slot>} />
            <Action icon={<ReplaceIcon />} label="替换" />
            <Action icon={<CursorIcon />} label="选择" trail={<Slot $ml={4}><Caret /></Slot>} />
          </ActionStack>
        </GroupBody>
        <GroupLabel>编辑</GroupLabel>
      </Group>

      <Collapse><ChevronUp /></Collapse>
    </Ribbon>

    <Workspace>
      <Page>
        <SelectedRun>
          <CheckMark>√</CheckMark>
          <ReturnArrow />
        </SelectedRun>
        <EmptyParagraph><ReturnArrow /></EmptyParagraph>
        <CropMarkLeft />
        <CropMarkRight />
        <RedFrame />
      </Page>
    </Workspace>

    <StatusBar>
      <StatusItem $ml={10}>第 1 页，共 1 页</StatusItem>
      <StatusItem $ml={31} $words={-3}>1 个字</StatusItem>
      <StatusItem $ml={28}><ProofIcon /></StatusItem>
      <StatusItem $ml={24} $track={-0.7}>英语(美国)</StatusItem>
      <StatusItem $ml={28}>插入</StatusItem>
      <ViewGroup>
        <ViewButton><ReadViewIcon /></ViewButton>
        <ViewButton $active><PrintViewIcon /></ViewButton>
        <ViewButton><WebViewIcon /></ViewButton>
      </ViewGroup>
      <StatusItem $ml={7}><ZoomSign /></StatusItem>
      <ZoomSlider><ZoomThumb /></ZoomSlider>
      <StatusItem $ml={6}><ZoomSign plus /></StatusItem>
      <ZoomPercent>190%</ZoomPercent>
    </StatusBar>

    <ImeBar>
      <ImeItem><ImeGrip /></ImeItem>
      <ImeItem $ml={16}>中</ImeItem>
      <ImeItem $ml={16}><ImeMoon /></ImeItem>
      <ImeItem $ml={18}><ImeGear /></ImeItem>
    </ImeBar>

    <Watermark>
      <WatermarkTop>
        <WatermarkBai>Bai</WatermarkBai>
        <PawIcon />
        <WatermarkCn>经验</WatermarkCn>
      </WatermarkTop>
      <WatermarkUrl>jingyan.baidu.com</WatermarkUrl>
    </Watermark>
  </Window>
)

export default App
